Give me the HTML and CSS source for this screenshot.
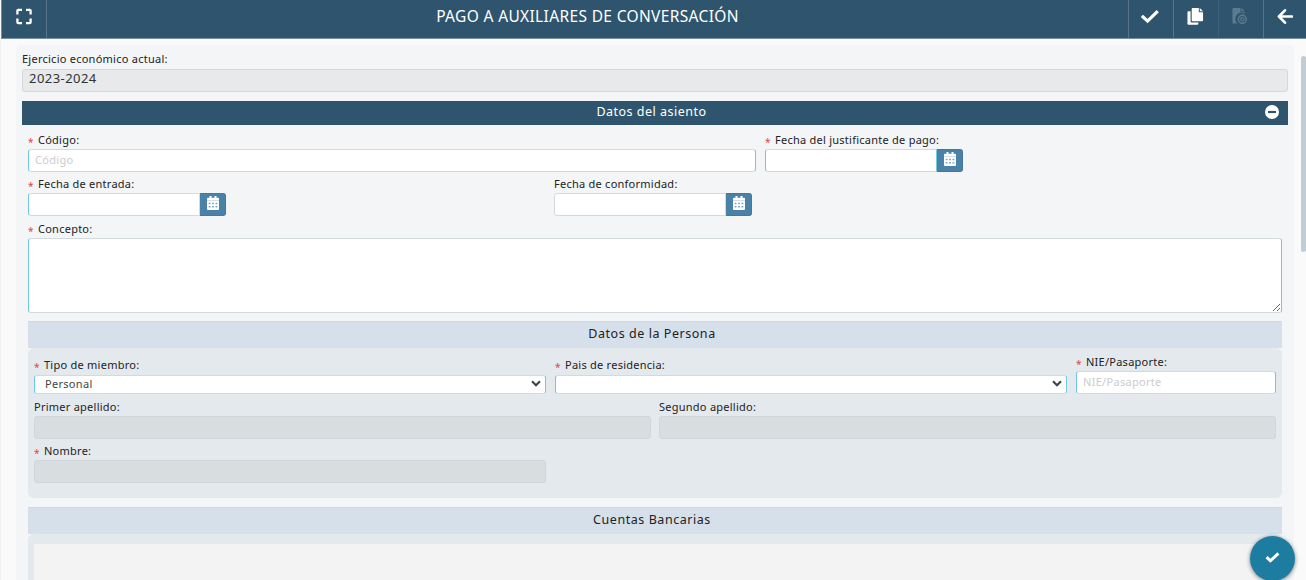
FILE: index.html
```
<!DOCTYPE html>
<html lang="es">
<head>
  <meta charset="utf-8">
  <title>Pago a auxiliares de conversación</title>
  <link rel="stylesheet" href="styles.css">
</head>
<body>

  <header class="toolbar">
    <button class="tool tool-left" title="Pantalla completa">
      <svg width="16" height="16" viewBox="0 0 16 16"><path d="M1.4 6V2.2A.8 .8 0 0 1 2.2 1.4H6M10 1.4H13.8A.8 .8 0 0 1 14.6 2.2V6M14.6 10V13.8A.8 .8 0 0 1 13.8 14.6H10M6 14.6H2.2A.8 .8 0 0 1 1.4 13.8V10" fill="none" stroke="#fff" stroke-width="2.3"/></svg>
    </button>
    <h1 class="title">PAGO A AUXILIARES DE CONVERSACIÓN</h1>
    <button class="tool" title="Aceptar">
      <svg width="18" height="14" viewBox="0 0 18 14"><path d="M2 7.4L6.6 11.6L15.6 2.8" fill="none" stroke="#fff" stroke-width="3.2" stroke-linecap="square"/></svg>
    </button>
    <button class="tool" title="Copiar">
      <svg width="17" height="18" viewBox="0 0 17 18"><path d="M5.5 0H12V4.5H16.5V13A1 1 0 0 1 15.5 14H5.5A1 1 0 0 1 4.5 13V1A1 1 0 0 1 5.5 0ZM13 0L16.5 3.5H13ZM1 3.5H3.3V14A1.3 1.3 0 0 0 4.6 15.3H11.5V16.8A1 1 0 0 1 10.5 17.8H1A1 1 0 0 1 0 16.8V4.5A1 1 0 0 1 1 3.5Z" fill="#fff"/></svg>
    </button>
    <button class="tool" title="Ver documento" disabled>
      <svg width="16" height="18" viewBox="0 0 16 18"><path d="M1 0H8.5V4.5H13V6.3A6 6 0 0 0 5.5 16.5H1A1 1 0 0 1 0 15.5V1A1 1 0 0 1 1 0ZM9.5 0L13 3.5H9.5Z" fill="#5a7b90"/><circle cx="10.5" cy="12" r="4.2" fill="none" stroke="#5a7b90" stroke-width="1.6"/><circle cx="10.5" cy="12" r="1.8" fill="none" stroke="#5a7b90" stroke-width="1.2"/></svg>
    </button>
    <button class="tool" title="Volver">
      <svg width="16" height="16" viewBox="0 0 16 16"><path d="M8 1.8L1.9 8L8 14.2M2.5 8H15" fill="none" stroke="#fff" stroke-width="2.6" stroke-linejoin="round" stroke-linecap="round"/></svg>
    </button>
  </header>

  <main class="page">
    <form class="panel">
      <div class="field ejercicio">
        <label>Ejercicio económico actual:</label>
        <input class="control" value="2023-2024" disabled>
      </div>

      <div class="bar">
        <h2>Datos del asiento</h2>
        <svg class="collapse" width="14" height="14" viewBox="0 0 14 14"><circle cx="7" cy="7" r="7" fill="#fff"/><path d="M3 7H11" stroke="#2f556e" stroke-width="2.2"/></svg>
      </div>

      <section class="asiento">
        <div class="row row-codigo">
          <div class="field">
            <label class="req">Código:</label>
            <input class="control needed" placeholder="Código">
          </div>
          <div class="field">
            <label class="req">Fecha del justificante de pago:</label>
            <div class="date"><input class="control needed"><button type="button" class="cal"><svg width="12" height="14" viewBox="0 0 12 14"><use href="#cal"/></svg></button></div>
          </div>
        </div>
        <div class="row row-fechas">
          <div class="field">
            <label class="req">Fecha de entrada:</label>
            <div class="date"><input class="control needed-left"><button type="button" class="cal"><svg width="12" height="14" viewBox="0 0 12 14"><use href="#cal"/></svg></button></div>
          </div>
          <div class="field">
            <label>Fecha de conformidad:</label>
            <div class="date"><input class="control"><button type="button" class="cal"><svg width="12" height="14" viewBox="0 0 12 14"><use href="#cal"/></svg></button></div>
          </div>
        </div>
        <div class="field concepto">
          <label class="req">Concepto:</label>
          <textarea class="control needed"></textarea>
        </div>

        <h3 class="subbar">Datos de la Persona</h3>
        <div class="group persona">
          <div class="row row-tipo">
            <div class="field">
              <label class="req">Tipo de miembro:</label>
              <div class="select"><select class="control needed"><option>Personal</option></select><svg class="chevron" width="10" height="7" viewBox="0 0 10 7"><path d="M1 1.2L5 5.2L9 1.2" fill="none" stroke="#3c444c" stroke-width="2.2"/></svg></div>
            </div>
            <div class="field">
              <label class="req">Pais de residencia:</label>
              <div class="select"><select class="control needed"><option></option></select><svg class="chevron" width="10" height="7" viewBox="0 0 10 7"><path d="M1 1.2L5 5.2L9 1.2" fill="none" stroke="#3c444c" stroke-width="2.2"/></svg></div>
            </div>
            <div class="field field-nie">
              <label class="req">NIE/Pasaporte:</label>
              <input class="control needed" placeholder="NIE/Pasaporte">
            </div>
          </div>
          <div class="row row-apellidos">
            <div class="field">
              <label>Primer apellido:</label>
              <input class="control" disabled>
            </div>
            <div class="field">
              <label>Segundo apellido:</label>
              <input class="control" disabled>
            </div>
          </div>
          <div class="field nombre">
            <label class="req">Nombre:</label>
            <input class="control" disabled>
          </div>
        </div>

        <h3 class="subbar">Cuentas Bancarias</h3>
        <div class="group cuentas">
          <div class="tabla"></div>
        </div>
      </section>
    </form>
  </main>

  <div class="scroll"></div>
  <button class="fab" title="Guardar">
    <svg width="15" height="11" viewBox="0 0 15 11"><path d="M1.6 5.2L5.4 8.8L13.4 1.4" fill="none" stroke="#fff" stroke-width="3"/></svg>
  </button>

  <!-- icono de calendario compartido -->
  <svg class="defs" width="0" height="0">
    <symbol id="cal" viewBox="0 0 12 14">
      <path d="M2.5 0H4.5V1.8H7.5V0H9.5V1.8H11A1 1 0 0 1 12 2.8V4H0V2.8A1 1 0 0 1 1 1.8H2.5ZM0 4.3H12V13A1 1 0 0 1 11 14H1A1 1 0 0 1 0 13Z" fill="#fff"/>
      <path d="M1.7 7.6H10.3M1.7 10.8H10.3" stroke="#7ea6c1" stroke-width="1.5" stroke-dasharray="1.8 1.6"/>
    </symbol>
  </svg>

</body>
</html>
```
FILE: styles.css
```
* {
  box-sizing: border-box;
}

body {
  margin: 0;
  height: 580px;
  overflow: hidden;
  display: flex;
  flex-direction: column;
  background: #fafafa;
  color: #222;
  font-family: "Noto Sans", "Open Sans", sans-serif;
  font-size: 11px;
}

h1, h2, h3 {
  margin: 0;
  font-weight: normal;
}

svg {
  display: block;
}

/* Barra superior */
.toolbar {
  display: flex;
  flex: none;
  height: 39px;
  margin-left: 1px;
  background: #2f556e;
  border-left: 1px solid #6f8a9d;
  border-bottom: 1px solid #7390a3;
}

.tool {
  display: flex;
  justify-content: center;
  width: 45px;
  padding: 8px 2px 0 0;
  border: 0;
  border-left: 1px solid #567589;
  background: none;
}

.tool:last-child {
  width: 43px;
  padding-right: 0;
}

.tool:disabled {
  border-left-color: #3b6078;
}

.tool svg {
  height: 17px;
}

.tool-left {
  padding-right: 0;
  border-left: 0;
  border-right: 1px solid #567589;
}

.title {
  flex: 1;
  text-align: center;
  color: #fff;
  font-size: 15.5px;
  line-height: 33px;
  letter-spacing: 0.35px;
}

/* Panel */
.page {
  flex: 1;
  min-height: 0;
  padding: 6px 12px 0 15px;
  border-left: 1px solid #f2f2f2;
}

.panel {
  padding: 5px 6px 0;
  background: #f3f5f7;
  border-radius: 5px 5px 0 0;
}

.field {
  display: flex;
  flex-direction: column;
}

label {
  height: 18px;
  line-height: 18px;
  white-space: nowrap;
  letter-spacing: 0.25px;
}

.req::before {
  content: "*";
  display: inline-block;
  width: 10px;
  color: #e04545;
  font-size: 10px;
  line-height: 10px;
  vertical-align: -2px;
}

.control {
  display: block;
  width: 100%;
  height: 23px;
  margin: 0;
  padding: 0 6px 2px;
  border: 1px solid #d3dade;
  border-radius: 3px;
  background: #fff;
  color: #444;
  font: inherit;
  letter-spacing: 0.3px;
  outline: none;
}

.control::placeholder {
  color: #ccc;
  opacity: 1;
}

.control:disabled {
  background: #d8dde0;
  border-color: #d0d6d9;
}

.needed {
  border-left-color: #72c7e3;
  border-right-color: #72c7e3;
}

.needed-left {
  border-left-color: #72c7e3;
}

.ejercicio label {
  height: 19px;
}

.ejercicio .control:disabled {
  padding-bottom: 5px;
  background: #e7e9ea;
  border-color: #d3d8db;
  color: #333;
  font-size: 13px;
  letter-spacing: 0.45px;
}

.bar {
  display: flex;
  align-items: center;
  height: 24px;
  margin-top: 9px;
  padding: 0 9px 2px 0;
  background: #2f556e;
  color: #fff;
}

.bar h2 {
  flex: 1;
  padding-left: 16px;
  text-align: center;
  font-size: 12.5px;
  line-height: 20px;
  letter-spacing: 0.5px;
}

.asiento {
  padding: 6px 6px 0;
}

.row {
  display: grid;
  column-gap: 9px;
  height: 44px;
}

.row-codigo {
  grid-template-columns: 728px 198px;
}

.row-fechas {
  grid-template-columns: 198px 198px;
  column-gap: 328px;
  height: 45px;
}

.date {
  display: flex;
}

.date .control {
  width: 172px;
  border-radius: 3px 0 0 3px;
}

.cal {
  width: 26px;
  height: 23px;
  padding: 2px 0 0 7px;
  border: 1px solid #4a769a;
  border-left: 0;
  border-radius: 0 3px 3px 0;
  background: #4a81a6;
}

.cal svg {
  margin-top: -5px;
}

.concepto .control {
  height: 75px;
}

.subbar {
  height: 27px;
  margin-top: 8px;
  background: #d6e0ea;
  border-top: 1px solid #ced9e1;
  text-align: center;
  font-size: 12.5px;
  line-height: 23px;
  letter-spacing: 0.55px;
  padding-right: 6px;
}

.group {
  padding: 5px 6px 0;
  border-radius: 6px;
  background: #e4e9ee;
}

.persona {
  height: 150px;
  margin-bottom: 9px;
}

.row-tipo {
  grid-template-columns: 512px 512px 200px;
  height: 41px;
}

.row-tipo .field {
  padding-top: 3px;
}

.row-tipo .field-nie {
  padding-top: 0;
}

.select {
  position: relative;
}

.select .control {
  height: 19px;
  margin-top: 1px;
  padding: 0 10px 2px;
  appearance: none;
}

.chevron {
  position: absolute;
  top: 6px;
  right: 5px;
}

.row-apellidos {
  grid-template-columns: 617px 617px;
  column-gap: 8px;
  margin-top: 4px;
}

.nombre {
  width: 512px;
}

.cuentas {
  height: 60px;
  padding-top: 10px;
}

.tabla {
  height: 50px;
  background: #f3f3f3;
}

/* Elementos flotantes */
.scroll {
  position: absolute;
  top: 56px;
  right: 0;
  width: 5px;
  height: 196px;
  border-radius: 3px;
  background: #c1cdd5;
}

.fab {
  position: absolute;
  left: 1250px;
  top: 536px;
  display: flex;
  align-items: center;
  justify-content: center;
  width: 45px;
  height: 45px;
  padding: 0 1px 2px 0;
  border: 0;
  border-radius: 50%;
  background: #1d7da1;
  box-shadow: 0 1px 4px rgba(0, 0, 0, 0.5);
}

.defs {
  position: absolute;
}
```
